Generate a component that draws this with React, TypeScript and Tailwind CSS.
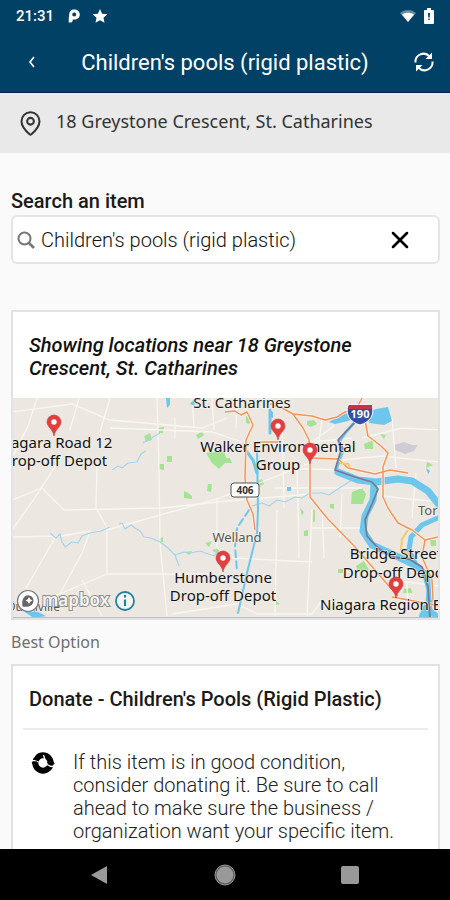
import { useState } from "react";
import { MapPin, X } from "lucide-react";

const pins = [
  { x: 42, y: 38 },
  { x: 266, y: 42 },
  { x: 211, y: 174 },
];

// Pins that sit over the neighbouring labels
const topPins = [
  { x: 298, y: 66 },
  { x: 384, y: 200 },
];

const minorRoads = [
  "M0 102L30 90L52 112L150 110L215 103L300 96",
  "M25 0L16 28L0 60M67 0L58 32M98 0L88 34M50 58L20 104L0 132",
  "M0 14L60 6L98 22L190 30L215 20M98 30L200 34L230 44",
  "M145 0L147 70L148 145L155 218M85 66L84 110L95 130L95 176",
  "M95 176L198 176M95 176L50 195L30 204M95 132L205 101L250 84L300 64",
  "M0 139L50 138L78 133L70 155L48 196M70 182L90 218M44 138L14 190",
  "M205 100L205 150L220 160L300 164M265 112L263 218M300 112L295 218",
  "M163 20L163 40M200 0L202 32M180 0L182 30M225 0L224 30M270 20L272 110",
  "M285 62L287 160M262 70L330 72M262 90L350 90M300 130L352 130",
  "M160 216L225 206L245 216L300 216L308 205L390 206",
  "M310 20L305 60M322 28L300 44L340 40M350 40L390 30L427 32",
  "M330 62L370 58L427 64M380 20L384 70M404 75L400 120M370 98L427 104",
  "M310 110L312 160M330 96L328 140M380 182L427 188M395 185L396 210",
];

const parks = [
  "M132 38l6 -3l2 7l-6 2zM146 30l6 -1l-1 6l-5 0zM155 58l5 0l0 6l-5 0zM147 66l5 0l0 6l-5 -1zM172 93l4 2l4 3l0 3l-8 -1zM196 86l4 0l-1 8l-4 -1zM184 37l6 -3l2 3l-6 4z",
  "M194 55l18 -2l3 10l-8 8l-7 -6zM234 18l6 2l-2 6l-4 -1zM295 23l7 -1l3 4l-6 3l-4 -2zM212 60l6 0l2 5l-7 0zM245 84l5 -3l2 5l-6 3z",
  "M340 94l10 -4l4 6l-3 10l-12 0zM352 46l9 -4l0 9l-8 0zM368 36l6 1l-2 4zM415 64l6 3l-7 3zM318 106l4 0l0 5l-4 -1zM288 110l4 4l-2 4z",
  "M292 133l4 -1l0 6l-4 0zM344 168l8 -5l5 9l-11 1zM392 191l7 -1l1 5l-9 0zM326 171l5 0l0 4l-5 0zM264 203l4 3l-4 1zM147 141l4 -2l0 5l-4 0zM173 154l7 -1l-3 4zM193 145l7 -2l-3 6zM200 152l8 -2l-2 7zM418 142l6 0l0 6l-5 0zM301 112l2 0l0 12l-2 0z",
];

const highways = [
  "M213 14L223 13L229 17L235 14L241 27L234 42L233 80L235 102L241 116L243 132",
  "M258 6L270 10L281 16L300 18L313 22L325 19L333 14L344 12L350 0",
  "M281 16L291 30L297 42L298 59L298 99L315 120L343 149L376 187L386 198",
  "M353 22L356 38L369 48L376 55L371 69L371 99L376 110L386 125L400 132L413 142L426 139",
  "M298 60L326 61L336 70L363 76L378 72L396 75",
  "M413 142L410 159L420 182L421 202M380 199L413 205L427 208M246 44L266 44",
];

const creeks = [
  "M100 72L106 68L110 70L116 65L125 64L129 56L134 53M131 45L141 39L148 35",
  "M38 135L44 140L48 136L50 144L53 149L60 144L66 145L70 138L78 135L89 133L98 129M107 126L110 125L113 131L119 127L123 130L128 133L132 139L139 140L148 144L156 150L163 157L172 154L179 155L188 153L202 158L207 153M163 157L167 168",
  "M240 108L250 105L257 108L265 102L273 104L283 99L290 100L298 95L310 95L317 97L329 89L340 82",
];

function Pin({ x, y }: { x: number; y: number }) {
  return (
    <g transform={`translate(${x} ${y})`}>
      <path
        d="M0 0C-1 -7 -7 -9 -7 -14A7 7 0 0 1 7 -14C7 -9 1 -7 0 0Z"
        fill="#e0403f"
        stroke="#cf3535"
        strokeWidth="0.6"
      />
      <circle cy="-14" r="2.7" fill="#fff" />
    </g>
  );
}

function LocationsMap() {
  return (
    <svg
      className="block h-[220px] w-full"
      viewBox="0 0 427 220"
      preserveAspectRatio="xMidYMid slice"
      role="img"
      aria-label="Map of nearby locations"
      fontFamily="'Noto Sans', sans-serif"
    >
      <rect width="427" height="220" fill="#ece8e1" />
      <g fill="#a5e294">
        {parks.map((d) => (
          <path key={d} d={d} />
        ))}
      </g>
      <path d="M382 47l10 -3l8 3l6 0l-4 6l-9 3l-10 -4z" fill="#cfccd6" />
      <g fill="none" stroke="#f8f6f1" strokeWidth="1.3">
        {minorRoads.map((d) => (
          <path key={d} d={d} />
        ))}
      </g>
      <g fill="none" stroke="#a4d3ee" strokeWidth="1.2" strokeLinejoin="round">
        {creeks.map((d) => (
          <path key={d} d={d} />
        ))}
      </g>

      {/* lakes and the river */}
      <g fill="#6dc6ec">
        <path d="M355 14L364 11L376 9L380 23L372 27L357 25Z" />
        <path d="M317 24L326 18L338 14L347 18L336 23L323 26Z" />
        <path d="M275 89h4v4h-4zM414 70l4 3l-2 3zM257 12l4 2v6l-4 -1z" />
        <path d="M0 202L8 210L20 211L34 218L22 220L0 206Z" />
        <path d="M154 0h4l0 7l-3 3zM178 6l4 -5l1 7z" />
      </g>
      <g fill="none" stroke="#6dc6ec" strokeLinejoin="round" strokeLinecap="round">
        <path d="M343 24L334 34L327 44L331 52L324 72" strokeWidth="3" />
        <path d="M326 74L346 82L364 84L386 81L400 83L416 93L428 108" strokeWidth="7" />
        <path
          d="M362 86L361 102L353 118L351 133L360 147L380 156L403 167L414 177L418 192L416 218"
          strokeWidth="7"
        />
        <path d="M428 119L410 127L399 139L397 152L403 165" strokeWidth="5" />
        <path d="M245 50L246 112L245 135L235 175L226 215" strokeWidth="2" />
        <path d="M258 12L258 35M232 50L241 62L245 75" strokeWidth="3" />
        <path d="M237 112L225 130L223 149L225 172" strokeWidth="2" strokeDasharray="7 4" />
        <path d="M416 205L410 218M414 210L427 220" strokeWidth="6" />
      </g>

      <g fill="none" stroke="#fff3e6" strokeWidth="3" strokeLinejoin="round">
        {highways.map((d) => (
          <path key={d} d={d} />
        ))}
      </g>
      <g fill="none" stroke="#f2935f" strokeWidth="1.5" strokeLinejoin="round">
        {highways.map((d) => (
          <path key={d} d={d} />
        ))}
      </g>
      <path
        d="M396 132L390 141L389 152L398 156M328 65L336 66L338 70"
        fill="none"
        stroke="#f0cd62"
        strokeWidth="2"
      />
      <path
        d="M343 24L326 42L330 49L323 72L343 79L360 84L366 91L360 106L353 122L355 138L366 150L380 159L397 161L410 169L416 189L418 220"
        fill="none"
        stroke="#777a92"
        strokeWidth="1.8"
        strokeLinejoin="round"
      />

      {/* road shields */}
      <rect x="219" y="85" width="28" height="14" rx="3" fill="#fff" stroke="#555" />
      <text x="233" y="96" fontSize="10" fontWeight="700" textAnchor="middle" fill="#333">
        406
      </text>
      <path
        d="M336 7C333 17 338 24 348 27C358 24 363 17 360 7Z"
        fill="#3150a5"
        stroke="#fff"
      />
      <path d="M337 7h23v4h-24z" fill="#c83243" />
      <text x="348" y="20" fontSize="11" fontWeight="700" textAnchor="middle" fill="#fff">
        190
      </text>

      <g
        fontSize="13"
        fill="#555"
        stroke="#f4f1ec"
        strokeWidth="1.5"
        paintOrder="stroke"
      >
        <text x="230" y="10" fontSize="15" fill="#1c1c1c" textAnchor="middle">
          St. Catharines
        </text>
        <text x="225" y="144" textAnchor="middle">Welland</text>
        <text x="406" y="117">Toronto</text>
        <text x="48" y="213" fontSize="12" textAnchor="end">Dunnville</text>
      </g>
      {pins.map((pin) => (
        <Pin key={pin.x} {...pin} />
      ))}
      <g
        fontSize="15"
        fill="#111"
        stroke="#f4f1ec"
        strokeWidth="1"
        paintOrder="stroke"
        textAnchor="middle"
      >
        <text x="42" y="50">Niagara Road 12</text>
        <text x="42" y="68">Drop-off Depot</text>
        <text x="266" y="54">Walker Environmental</text>
        <text x="266" y="72">Group</text>
        <text x="211" y="185">Humberstone</text>
        <text x="211" y="203">Drop-off Depot</text>
        <text x="384" y="161">Bridge Street</text>
        <text x="384" y="180">Drop-off Depot</text>
        <text x="308" y="212" textAnchor="start">Niagara Region Bridge</text>
      </g>
      {topPins.map((pin) => (
        <Pin key={pin.x} {...pin} />
      ))}

      {/* mapbox wordmark */}
      <circle cx="16" cy="203" r="10.5" fill="#fff" stroke="#777" strokeWidth="1.2" />
      <path
        d="M10.500 208.500C9.500 203 11 197.500 16.300 197.300A5.300 5.300 0 0 1 21.500 202.500C21.300 207.800 16 209.500 10.500 208.500Z"
        fill="#666"
      />
      <path
        d="M17 199l1.200 2.300l2.300 1.200l-2.300 1.200l-1.200 2.300l-1.200 -2.300l-2.300 -1.200l2.300 -1.200z"
        fill="#fff"
      />
      <text
        x="30"
        y="208"
        fontSize="17"
        fontWeight="600"
        fill="#f7f5f1"
        stroke="#8d8d8d"
        strokeWidth="2"
        paintOrder="stroke"
      >
        mapbox
      </text>
      <circle cx="113" cy="203" r="9" fill="#f5f5f2" stroke="#24809f" strokeWidth="1.8" />
      <path d="M113 201.500v6.500M113 197v2.500" stroke="#24809f" strokeWidth="2.200" />
      <path d="M0 219.500H427" stroke="#bdbdbd" />
    </svg>
  );
}

function StatusBar() {
  return (
    <div className="flex h-8 items-center justify-between px-4 text-white">
      <div className="flex items-center gap-[14px]">
        <span className="text-[15px] font-medium">21:31</span>
        <div className="flex items-center gap-3">
          <svg className="h-[14px] w-3" viewBox="0 0 12 14">
            <path
              fillRule="evenodd"
              d="M6 0.500C9.500 0.500 11.800 2.600 11.800 5.600C11.800 8.700 9.500 10.600 6.300 10.600H4.800V11C4.800 12.700 3.600 13.600 2.200 13.600H0.700V9.500L1.200 5.500C1.300 2.400 3 0.500 6 0.500ZM6.200 3.600A2 2 0 1 0 6.200 7.600A2 2 0 1 0 6.200 3.600Z"
              fill="currentColor"
            />
          </svg>
          <svg className="size-4" viewBox="0 0 24 24" fill="currentColor">
            <path d="M12 1.500l3.200 7.100l7.800 .8l-5.800 5.200l1.600 7.700L12 18.400l-6.800 3.900l1.600 -7.700L1 9.400l7.800 -.8z" />
          </svg>
        </div>
      </div>
      <div className="flex items-center gap-2">
        <svg className="h-3 w-4" viewBox="0 0 16 12">
          <path d="M0 3C5 -1 11 -1 16 3L8 12Z" fill="#fff" opacity="0.4" />
          <path d="M2 4.500C6 2 10 2 14 4.500L8 12Z" fill="#fff" />
        </svg>
        <svg className="h-4 w-[10px]" viewBox="0 0 10 16">
          <path
            d="M3 0h4v2h2a1 1 0 0 1 1 1v12a1 1 0 0 1 -1 1H1a1 1 0 0 1 -1 -1V3a1 1 0 0 1 1 -1h2z"
            fill="#fff"
          />
          <path d="M4 5h2l-.3 4.500h-1.400zM4.300 10.500h1.400v1.500h-1.400z" fill="#004165" />
        </svg>
      </div>
    </div>
  );
}

function Header() {
  return (
    <header className="shrink-0 border-b border-[#00284a] bg-[#004165] text-white">
      <StatusBar />
      <div className="flex h-[60px] items-center px-3">
        <button aria-label="Back" className="flex w-10 items-center justify-center">
          <svg
            className="h-3 w-2"
            viewBox="0 0 8 12"
            fill="none"
            stroke="currentColor"
            strokeWidth="1.600"
          >
            <path d="M6 1L2 6L6 11" />
          </svg>
        </button>
        <h1 className="flex-1 text-center text-[22px] whitespace-nowrap">
          Children's pools (rigid plastic)
        </h1>
        <button aria-label="Refresh" className="flex w-10 items-center justify-end pr-1">
          <svg
            className="size-5"
            viewBox="0 0 20 20"
            fill="none"
            stroke="currentColor"
            strokeWidth="2"
          >
            <path d="M1.500 10.500A8 8 0 0 1 15.500 4.500M18.500 9.500A8 8 0 0 1 4.500 15.500" />
            <path d="M18 0.500V7H11.500ZM2 19.500V13H8.500Z" fill="currentColor" stroke="none" />
          </svg>
        </button>
      </div>
    </header>
  );
}

function SearchBox() {
  const [query, setQuery] = useState("Children's pools (rigid plastic)");

  return (
    <section className="pt-[34px]">
      <label htmlFor="item" className="block text-[20px] leading-7 font-medium text-[#1a1a1a]">
        Search an item
      </label>
      <div className="flex h-[49px] items-center rounded-md border-2 border-[#e6e5e6] bg-white pr-6 pl-1">
        <svg
          className="size-[18px] shrink-0 text-[#777]"
          viewBox="0 0 18 18"
          fill="none"
          stroke="currentColor"
          strokeWidth="2"
        >
          <circle cx="7.500" cy="7.500" r="6" />
          <path d="M12 12L17 17" strokeWidth="2.600" />
        </svg>
        <input
          id="item"
          value={query}
          onChange={(e) => setQuery(e.target.value)}
          className="min-w-0 flex-1 bg-transparent pl-[6px] text-[20px] font-light text-[#111] outline-none"
        />
        <button aria-label="Clear" onClick={() => setQuery("")}>
          <X size={28} strokeWidth={2.2} className="text-black" />
        </button>
      </div>
    </section>
  );
}

function RecycleIcon() {
  return (
    <svg className="size-6 shrink-0" viewBox="0 0 24 24">
      <circle cx="12" cy="12" r="7.700" fill="none" stroke="#000" strokeWidth="6" />
      <path
        d="M0 9.500L3.500 9.700L7.500 11M2.500 6.500L4.500 3.200M12.500 4L14 8.500M16 13.500L20 15.500L24 15"
        fill="none"
        stroke="#fff"
        strokeWidth="1.300"
      />
      <path d="M15.500 11.500L24 13L20 8ZM0.500 11.500L6 10L3 15Z" fill="#000" />
    </svg>
  );
}

function NavBar() {
  return (
    <nav className="flex h-[51px] shrink-0 items-center justify-between bg-black px-[91px] text-[#999]">
      <button aria-label="System back">
        <svg className="h-5 w-[18px]" viewBox="0 0 18 20" fill="currentColor">
          <path d="M0 10L16 1V19Z" />
        </svg>
      </button>
      <button aria-label="Home">
        <svg className="size-[22px]" viewBox="0 0 22 22">
          <circle cx="11" cy="11" r="10" fill="#555" stroke="#999" />
          <circle cx="11" cy="11" r="8.500" fill="currentColor" />
        </svg>
      </button>
      <button aria-label="Recent apps" className="size-[18px] rounded-xs bg-[#999]" />
    </nav>
  );
}

export default function App() {
  return (
    <div className="flex h-screen flex-col bg-[#fafafb] font-['Roboto',sans-serif]">
      <Header />
      <main className="min-h-0 flex-1 overflow-y-auto [scrollbar-width:none]">
        <div className="flex h-[60px] items-center gap-3 bg-[#e9e9e9] px-[17px] text-[#333]">
          <MapPin size={27} strokeWidth={1.8} className="shrink-0" />
          <p className="pb-1 font-['Noto_Sans',sans-serif] text-[18px]">
            18 Greystone Crescent, St. Catharines
          </p>
        </div>

        <div className="pr-[10px] pl-[11px]">
          <SearchBox />

          <section className="mt-[46px] border-2 border-[#e2e2e2] bg-white">
            <h2 className="px-4 pt-[22px] pb-[18px] text-[20px] leading-[23px] font-medium text-[#111] italic">
              Showing locations near 18 Greystone Crescent, St. Catharines
            </h2>
            <LocationsMap />
          </section>

          <p className="mt-2 font-['Noto_Sans',sans-serif] text-[16px] leading-7 text-[#6f6f6f]">
            Best Option
          </p>

          <section className="mt-2 border-2 border-[#e2e2e2] bg-white px-[10px]">
            <h2 className="border-b-2 border-[#ececec] px-[6px] pt-5 pb-4 text-[20px] leading-[26px] font-medium text-[#1a1a1a]">
              Donate - Children's Pools (Rigid Plastic)
            </h2>
            <div className="flex gap-[18px] px-2 pt-[21px] pb-6">
              <RecycleIcon />
              <p className="text-[20px] leading-[23px] font-light text-[#222]">
                If this item is in good condition, consider donating it. Be sure to call
                ahead to make sure the business / organization want your specific item.
              </p>
            </div>
          </section>
        </div>
      </main>
      <NavBar />
    </div>
  );
}
